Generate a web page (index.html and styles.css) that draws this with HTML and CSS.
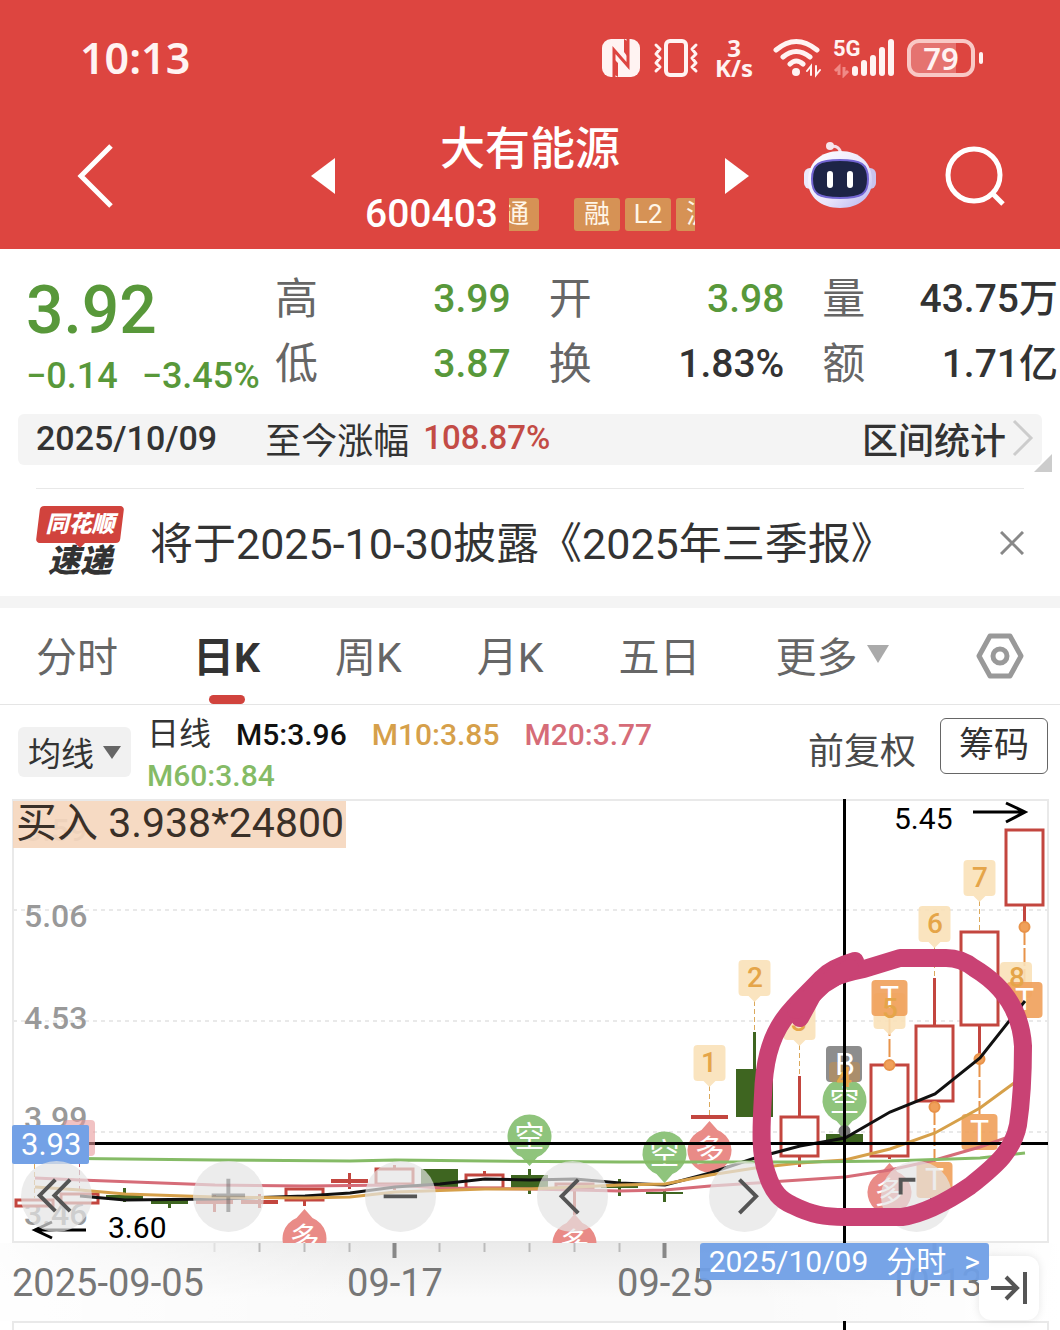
FILE: index.html
```html
<!DOCTYPE html>
<html lang="zh-CN">

<head>
  <meta charset="UTF-8">
  <meta name="viewport" content="width=device-width, initial-scale=1">
  <title>大有能源 600403</title>
  <link rel="stylesheet" href="styles.css">
</head>

<body>
  <header class="header">
    <div class="status">
      <span class="time">10:13</span>
      <div class="status-icons">
        <svg width="40" height="40" viewBox="0 0 40 40">
          <rect x="1" y="1" width="38" height="38" rx="9" fill="#fff3f2" />
          <path d="M13 39V12L27 28V1" fill="none" stroke="#dd4540" stroke-width="3" />
          <path d="M14 22V37L17 39V25zM26 18V3L23 1V14z" fill="#dd4540" />
        </svg>
        <svg width="46" height="40" viewBox="0 0 46 40" fill="none" stroke="#fff3f2" stroke-width="4" stroke-linejoin="round" stroke-linecap="round">
          <rect x="13" y="3" width="20" height="34" rx="4" />
          <path d="M3 7l4 4-4 5 4 4-4 5 4 4-4 4M43 7l-4 4 4 5-4 4 4 5-4 4 4 4" stroke-width="3" />
        </svg>
        <div class="speed"><span>3</span><span>K/s</span></div>
        <svg class="wifi" width="48" height="40" viewBox="0 0 48 40" fill="none" stroke="#fff3f2" stroke-width="5" stroke-linecap="round">
          <path d="M3 12Q23-5 44 12M10 19Q23 8 37 19M17 26Q23 20 30 26" />
          <circle cx="23" cy="34" r="4" fill="#fff3f2" stroke="none" />
          <path d="M38 37V28l-4 5M43 28v9l4-5" stroke-width="2" />
        </svg>
        <svg class="signal" width="62" height="40" viewBox="0 0 62 40">
          <text x="0" y="18">5G</text>
          <g stroke="#fff3f2" stroke-width="6" stroke-linecap="round">
            <path d="M22 31v4M31 25v10M40 20v15M49 12v23M58 4v31" />
          </g>
          <path d="M6 37v-8l-4 4M11 29v8l4-4" stroke="#f08a86" stroke-width="3" fill="none" />
        </svg>
        <div class="battery"><span>79</span></div>
      </div>
    </div>
    <nav class="nav">
      <button class="icon-btn back" aria-label="返回">
        <svg width="36" height="64" viewBox="0 0 36 64"><path d="M34 2L4 32l30 30" fill="none" stroke="#fff" stroke-width="5" /></svg>
      </button>
      <div class="stock">
        <button class="icon-btn" aria-label="上一只">
          <svg width="24" height="36" viewBox="0 0 24 36"><path d="M24 0v36L0 18z" fill="#fff" /></svg>
        </button>
        <div class="stock-info">
          <h1>大有能源</h1>
          <div class="code-row">
            <span class="code">600403</span>
            <div class="tags">
              <div class="tag-strip">
                <span class="tag tag-first">通</span>
                <span class="tag">融</span>
                <span class="tag">L2</span>
                <span class="tag">沪</span>
              </div>
            </div>
          </div>
        </div>
        <button class="icon-btn" aria-label="下一只">
          <svg width="24" height="36" viewBox="0 0 24 36"><path d="M0 0v36l24-18z" fill="#fff" /></svg>
        </button>
      </div>
      <div class="nav-right">
        <button class="icon-btn" aria-label="智能助手">
          <svg width="74" height="70" viewBox="0 0 74 70">
            <defs>
              <linearGradient id="shell" x1="0" y1="0" x2="1" y2="1">
                <stop offset="0" stop-color="#fff" />
                <stop offset=".6" stop-color="#e9e4fb" />
                <stop offset="1" stop-color="#b3b2ee" />
              </linearGradient>
            </defs>
            <path d="M26 6Q37 3 38 14" fill="none" stroke="#f3dfe8" stroke-width="3" />
            <circle cx="27" cy="5" r="4" fill="#f7e6ec" />
            <rect x="1" y="27" width="12" height="21" rx="6" fill="#ece9fb" />
            <rect x="61" y="27" width="12" height="21" rx="6" fill="#c9c3ee" />
            <path d="M37 10C57 10 69 22 69 40C69 56 56 67 37 67S5 56 5 40C5 22 17 10 37 10z" fill="url(#shell)" />
            <path d="M37 19C58 19 65 23 65 38S59 57 37 57S9 53 9 38S16 19 37 19z" fill="#1d2446" stroke="#7265d2" stroke-width="2" />
            <path d="M27 33v11M47 33v11" stroke="#fff" stroke-width="6" stroke-linecap="round" />
          </svg>
        </button>
        <button class="icon-btn" aria-label="搜索">
          <svg width="60" height="60" viewBox="0 0 60 60" fill="none" stroke="#fff" stroke-width="5"><circle cx="29" cy="29" r="26" /><path d="M48 48l10 10" /></svg>
        </button>
      </div>
    </nav>
  </header>

  <section class="quote">
    <div class="price-box">
      <div class="price">3.92</div>
      <div class="change"><span>−0.14</span><span>−3.45%</span></div>
    </div>
    <dl class="stats">
      <div><dt>高</dt><dd class="down">3.99</dd></div>
      <div><dt>开</dt><dd class="down">3.98</dd></div>
      <div><dt>量</dt><dd>43.75万</dd></div>
      <div><dt>低</dt><dd class="down">3.87</dd></div>
      <div><dt>换</dt><dd>1.83%</dd></div>
      <div><dt>额</dt><dd>1.71亿</dd></div>
    </dl>
  </section>

  <section class="range">
    <span class="range-date">2025/10/09</span>
    <span>至今涨幅</span>
    <span class="range-rate">108.87%</span>
    <button class="range-btn">区间统计
      <svg width="22" height="38" viewBox="0 0 22 38"><path d="M2 2l17 17L2 36" fill="none" stroke="#ccc" stroke-width="3" /></svg>
    </button>
    <i class="corner"></i>
  </section>

  <section class="news">
    <div class="news-logo">
      <span class="logo-top">同花顺</span>
      <span class="logo-bottom">速递</span>
    </div>
    <a class="news-link" href="#">将于2025-10-30披露《2025年三季报》</a>
    <button class="icon-btn" aria-label="关闭">
      <svg width="24" height="24" viewBox="0 0 24 24"><path d="M1 1l22 22M23 1L1 23" stroke="#888" stroke-width="3" /></svg>
    </button>
  </section>

  <nav class="tabs">
    <button>分时</button>
    <button class="active">日K</button>
    <button>周K</button>
    <button>月K</button>
    <button>五日</button>
    <button class="more">更多
      <svg width="22" height="18" viewBox="0 0 22 18"><path d="M0 0h22L11 18z" fill="#aaa" /></svg>
    </button>
    <button class="gear" aria-label="设置">
      <svg width="48" height="46" viewBox="0 0 48 46" fill="none" stroke="#999" stroke-width="5" stroke-linejoin="round"><path d="M14 3h20l11 20-11 20H14L3 23z" /><circle cx="24" cy="23" r="7" /></svg>
    </button>
  </nav>

  <section class="ma">
    <button class="ma-select">均线
      <svg width="18" height="13" viewBox="0 0 18 13"><path d="M0 0h18L9 13z" fill="#666" /></svg>
    </button>
    <div class="ma-values">
      <span class="ma-name">日线</span>
      <span class="m5">M5:3.96</span>
      <span class="m10">M10:3.85</span>
      <span class="m20">M20:3.77</span>
      <span class="m60">M60:3.84</span>
    </div>
    <button class="fq">前复权</button>
    <button class="chips">筹码</button>
  </section>

  <section class="chart">
    <svg class="kline" viewBox="0 799 1060 531">
      <defs>
        <linearGradient id="axisShade" x1="0" y1="0" x2="0" y2="1">
          <stop offset="0" stop-color="#ebebeb" />
          <stop offset=".7" stop-color="#fafafa" />
          <stop offset="1" stop-color="#fafafa" />
        </linearGradient>
        <linearGradient id="axisFade">
          <stop offset="0" stop-color="#fff" stop-opacity=".9" />
          <stop offset=".35" stop-color="#fff" stop-opacity="0" />
          <stop offset=".7" stop-color="#fff" stop-opacity="0" />
          <stop offset="1" stop-color="#fff" />
        </linearGradient>
        <clipPath id="plot"><rect x="12" y="799" width="1038" height="444" /></clipPath>
        <g id="short">
          <path d="M0 29L-8 20A22 22 0 1 1 8 20z" fill="#8fc47c" />
          <text class="mark" y="10">空</text>
        </g>
        <g id="long">
          <path d="M0-29L-8-20A22 22 0 1 0 8-20z" fill="#e98b87" />
          <text class="mark" y="11">多</text>
        </g>
        <path id="flag" d="M-12-18h24q4 0 4 4v28q0 4-4 4h-6l-6 6-6-6h-6q-4 0-4-4v-28q0-4 4-4z" fill="#fae1b8" fill-opacity=".9" />
        <g id="trade">
          <rect x="-18" y="-18" width="36" height="36" rx="4" fill="#f0a05a" fill-opacity=".9" />
          <text class="trade-text" y="10">T</text>
        </g>
      </defs>

      <!-- time axis background -->
      <rect x="0" y="1243" width="1060" height="78" fill="url(#axisShade)" />
      <rect x="0" y="1243" width="1060" height="78" fill="url(#axisFade)" />

      <g fill="none" stroke="#e9e9e9" stroke-width="2">
        <path d="M13 1242V800H1048V1242zM13 1330V1322H1048V1330" />
        <path d="M13 910H1048M13 1021H1048M13 1132H1048" stroke-dasharray="4 4" />
      </g>

      <g class="y-labels">
        <text x="24" y="841" opacity=".5">3.59</text>
        <text x="24" y="927">5.06</text>
        <text x="24" y="1029">4.53</text>
        <text x="24" y="1129">3.99</text>
        <text x="24" y="1225">3.46</text>
      </g>

      <g clip-path="url(#plot)">
        <!-- nine-turn guide lines -->
        <g stroke="#dba95c" stroke-width="1" stroke-dasharray="5 3">
          <path d="M34.5 1164V1198M709.5 1086V1117M754.5 1001V1032M799.5 1045V1076M934.5 947V978M979.5 901V932" />
          <path d="M79.5 1162V1194" stroke="#b55368" />
        </g>

        <!-- rising candles -->
        <g fill="#fff" stroke="#c3463f" stroke-width="3">
          <path d="M304.5 1200V1206M394.5 1165V1190M484.5 1171V1175M574.5 1187V1215M799.5 1076V1167M889.5 1066V1159M934.5 978V1107M979.5 932V1060M1024.5 905V926" />
          <path d="M214.5 1195V1212M259.5 1194V1208M349.5 1173V1189" />
          <path d="M196 1202h37M241 1202h37M331 1181h37M691 1117h37" stroke-width="4" />
          <rect x="16" y="1200" width="37" height="6" />
          <rect x="61" y="1194" width="37" height="9" />
          <rect x="286" y="1189" width="37" height="11" />
          <rect x="376" y="1169" width="37" height="15" />
          <rect x="466" y="1175" width="37" height="13" />
          <rect x="556" y="1184" width="37" height="4" />
          <rect x="781" y="1117" width="37" height="39" />
          <rect x="871" y="1065" width="37" height="91" />
          <rect x="916" y="1026" width="37" height="75" />
          <rect x="961" y="932" width="37" height="93" />
          <rect x="1006" y="830" width="37" height="75" />
        </g>

        <!-- falling candles -->
        <g fill="#3e6520" stroke="#3e6520">
          <path d="M124.5 1188V1202M169.5 1200V1208M529.5 1169V1194M619.5 1179V1196M664.5 1190V1202M754.5 1032V1080" stroke-width="3" />
          <g stroke="none">
            <rect x="106" y="1195" width="37" height="4" />
            <rect x="151" y="1200" width="37" height="4" />
            <rect x="421" y="1169" width="37" height="19" />
            <rect x="511" y="1175" width="37" height="13" />
            <rect x="601" y="1186" width="37" height="2" />
            <rect x="646" y="1192" width="37" height="2" />
            <rect x="736" y="1069" width="37" height="48" />
            <rect x="826" y="1134" width="37" height="11" />
          </g>
        </g>

        <!-- signals -->
        <use href="#short" x="529.5" y="1137" />
        <use href="#short" x="664.5" y="1154" />
        <use href="#short" x="844.5" y="1101" />
        <use href="#long" x="709.5" y="1150" />
        <use href="#long" x="304.5" y="1238" />
        <use href="#long" x="574.5" y="1243" />
        <use href="#long" x="889.5" y="1192" />

        <g fill="#f0a05a" stroke="#e8934a" stroke-width="2">
          <path d="M889.5 1018V1065M1024.5 927V982M979.5 1059V1114M934.5 1107V1162" stroke-dasharray="18 3" />
          <circle cx="889.5" cy="1065" r="5" />
          <circle cx="934.5" cy="1107" r="5" />
          <circle cx="979.5" cy="1059" r="5" />
          <circle cx="1024.5" cy="927" r="5" />
        </g>

        <g class="flags">
          <use href="#flag" x="709.5" y="1063" /><text x="709" y="1072">1</text>
          <use href="#flag" x="754.5" y="978" /><text x="755" y="987">2</text>
          <use href="#flag" x="799.5" y="1022" /><text x="799" y="1031">3</text>
          <use href="#flag" x="889.5" y="1011" />
          <use href="#flag" x="934.5" y="924" /><text x="935" y="933">6</text>
          <use href="#flag" x="979.5" y="878" /><text x="980" y="887">7</text>
          <use href="#flag" x="1016" y="980" />
        </g>
        <use href="#trade" x="889.5" y="998" />
        <use href="#trade" x="1024.5" y="1000" />
        <use href="#trade" x="979.5" y="1132" />
        <use href="#trade" x="934.5" y="1180" />
        <rect x="826" y="1046" width="36" height="36" rx="4" fill="#8d8d8d" />
        <rect x="829" y="1062" width="31" height="20" rx="4" fill="#b78e5c" fill-opacity=".7" />
        <text class="trade-text" x="845" y="1075">B</text>
        <circle cx="844.5" cy="1131" r="6" fill="#777" />
        <g class="flags">
          <text x="844" y="1087">4</text>
          <text x="890" y="1018">5</text>
          <text x="1017" y="987">8</text>
        </g>

        <!-- moving averages -->
        <g fill="none" stroke-width="3">
          <path stroke="#d66c78" d="M35 1178L80 1180L215 1185L305 1186L395 1185L440 1188L530 1189L620 1191L665 1190L710 1186L800 1180L845 1177L890 1170L935 1160L980 1147L1025 1131" />
          <path stroke="#111" d="M80 1196L125 1200L215 1199L305 1196L350 1193L395 1187L440 1184L485 1179L530 1180L575 1179L620 1183L665 1185L710 1173L755 1158L800 1146L845 1138L890 1112L935 1094L980 1058L1025 1001" />
          <path stroke="#d6a04a" d="M35 1187L80 1190L125 1194L215 1197L305 1198L350 1197L395 1192L485 1189L530 1189L575 1187L620 1185L665 1184L710 1175L755 1168L800 1163L845 1160L890 1149L935 1133L980 1108L1025 1075" />
          <path stroke="#85bb66" d="M35 1158L125 1159L215 1160L350 1161L395 1160L485 1161L620 1162L800 1162L890 1161L980 1158L1025 1153" />
        </g>
      </g>

      <!-- high and low -->
      <g class="extremes">
        <text x="894" y="829">5.45</text>
        <text x="108" y="1238">3.60</text>
        <path d="M973 812H1024M1006 803L1025 812L1006 822M86 1230H36M52 1222L35 1230L52 1238" />
      </g>

      <!-- crosshair -->
      <path d="M844.5 799V1243M844.5 1321V1330M80 1143.5H1048" stroke="#000" stroke-width="3" />
      <rect x="64" y="1120" width="31" height="36" rx="4" fill="#e79a9b" fill-opacity=".6" />
      <rect x="12" y="1125" width="77" height="39" rx="2" fill="#73a1e6" />
      <text class="cross-price" x="21" y="1155">3.93</text>

      <rect x="13" y="801" width="333" height="47" fill="#f5d3b8" fill-opacity=".85" />
      <text class="buy" x="16" y="837">买入 3.938*24800</text>

      <!-- ticks and dates -->
      <path d="M214.5 1243v9" stroke="#e0e0e0" stroke-width="2" />
      <path d="M259.5 1243v9M304.5 1243v9M349.5 1243v9M439.5 1243v9M484.5 1243v9M529.5 1243v9M574.5 1243v9M619.5 1243v9" stroke="#bbb" stroke-width="2" />
      <path d="M394.5 1243v15M664.5 1243v15M934.5 1243v15" stroke="#888" stroke-width="4" />
      <g class="dates">
        <text x="12" y="1296">2025-09-05</text>
        <text class="mid" x="395" y="1296">09-17</text>
        <text class="mid" x="665" y="1296">09-25</text>
        <text class="mid" x="935" y="1296">10-13</text>
      </g>
    </svg>

    <div class="controls">
      <button aria-label="最左"><svg viewBox="0 0 72 72"><path d="M35 19L19 35L35 51M50 19L34 35L50 51" /></svg></button>
      <button aria-label="放大"><svg class="pale" viewBox="0 0 72 72"><path d="M19 35H53M36 18V52" /></svg></button>
      <button aria-label="缩小"><svg viewBox="0 0 72 72"><path d="M19 36H53" /></svg></button>
      <button aria-label="左移"><svg viewBox="0 0 72 72"><path d="M42 19L25 36L42 53" /></svg></button>
      <button aria-label="右移"><svg viewBox="0 0 72 72"><path d="M31 19L48 36L31 53" /></svg></button>
      <button aria-label="全屏"><svg viewBox="0 0 72 72"><path d="M20 34V19H35M52 38V53H38" /></svg></button>
    </div>

    <svg class="scribble" viewBox="0 799 1060 531">
      <path d="M855 961C838 966 828 972 822 978C808 993 795 1004 784 1019C769 1040 764 1065 763 1095C761 1130 760 1155 767 1174C773 1193 781 1200 792 1205C812 1215 825 1217 845 1217H902C923 1214 945 1203 970 1186C998 1164 1013 1150 1018 1125C1021 1105 1023 1080 1023 1046C1021 1012 1004 986 974 968C965 961 956 958 946 958H900L864 969C834 975 823 981 812 996L800 1018" />
      <path d="M850 968L824 984L796 1010" />
    </svg>

    <button class="latest" aria-label="回到最新">
      <svg width="38" height="34" viewBox="0 0 38 34" fill="none" stroke="#555" stroke-width="4"><path d="M1 17H27M16 6L27 17L16 28M35 1V33" /></svg>
    </button>
    <button class="date-tip"><span>2025/10/09</span><span>分时</span><span>&gt;</span></button>
  </section>
</body>

</html>
```
FILE: styles.css
```css
* {
  box-sizing: border-box;
}

body {
  margin: 0;
  background: #fff;
  color: #333;
  font-family: Roboto, "Noto Sans CJK SC", sans-serif;
}

button {
  padding: 0;
  border: none;
  background: none;
  color: inherit;
  font: inherit;
  cursor: pointer;
}

svg {
  display: block;
}

.header {
  background: #dd4540;
  color: #fff;
}

.status {
  display: flex;
  justify-content: space-between;
  align-items: center;
  height: 110px;
  padding: 6px 85px 0 80px;
}

.time {
  color: #fff3f2;
  font: 600 43px/48px "Noto Sans", sans-serif;
}

.status-icons {
  display: flex;
  align-items: center;
  gap: 12px;
}

.speed {
  display: flex;
  flex-direction: column;
  align-items: center;
  width: 46px;
  color: #fff3f2;
  font: 700 24px/20px "Noto Sans", sans-serif;
}

.wifi {
  margin-left: 4px;
}

.signal text {
  fill: #fff3f2;
  font-size: 22px;
  font-weight: 700;
}

.battery {
  position: relative;
  width: 68px;
  height: 38px;
  border: 4px solid #f9c8c5;
  border-radius: 12px;
  background: linear-gradient(90deg, #e57370 75%, #dd4540 75%);
  color: #fff3f2;
  font: 600 31px/30px "Noto Sans", sans-serif;
  text-align: center;
}

.battery::after {
  content: "";
  position: absolute;
  right: -12px;
  top: 9px;
  width: 4px;
  height: 12px;
  border-radius: 2px;
  background: #fff3f2;
}

.nav {
  display: grid;
  grid-template-columns: 1fr auto 1fr;
  align-items: center;
  height: 139px;
  padding: 0 55px 8px 77px;
}

.back {
  justify-self: start;
}

.stock {
  display: flex;
  align-items: center;
  gap: 30px;
  margin-left: -22px;
}

.stock-info {
  width: 330px;
  padding-top: 8px;
}

h1 {
  margin: 0;
  font-size: 45px;
  font-weight: 500;
  line-height: 54px;
  text-align: center;
}

.code-row {
  display: flex;
  align-items: center;
  gap: 11px;
  height: 45px;
  margin-top: 15px;
}

.code {
  font-size: 39px;
  font-weight: 500;
}

.tags {
  flex: 1;
  overflow: hidden;
}

.tag-strip {
  display: flex;
  gap: 5px;
  margin-left: -16px;
}

.tag {
  flex: none;
  width: 46px;
  border-radius: 3px;
  background: #d69255;
  color: #fff6e8;
  font-size: 26px;
  line-height: 33px;
  text-align: center;
}

.tag-first {
  margin-right: 30px;
}

.nav-right {
  display: flex;
  justify-content: flex-end;
  align-items: center;
  gap: 68px;
}

.quote {
  display: flex;
  padding: 17px 2px 6px 26px;
}

.price-box {
  flex: none;
  width: 249px;
  padding-top: 12px;
  color: #58983a;
  font-weight: 500;
}

.price {
  font-size: 66px;
  line-height: 66px;
}

.change {
  display: flex;
  gap: 24px;
  font-size: 36px;
  line-height: 64px;
}

.stats {
  display: grid;
  flex: 1;
  grid-template-columns: 1fr 1fr 1fr;
  grid-auto-rows: 65px;
  column-gap: 38px;
  margin: 0;
}

.stats div {
  display: flex;
  justify-content: space-between;
  align-items: center;
}

.stats dt {
  color: #666;
  font-size: 43px;
  line-height: 60px;
}

.stats dd {
  margin: 0;
  font-size: 39px;
  font-weight: 500;
  line-height: 60px;
  white-space: nowrap;
}

.stats .down {
  color: #58983a;
}

.range {
  position: relative;
  display: flex;
  align-items: center;
  height: 51px;
  margin: 0 18px 23px;
  padding: 0 8px 4px 18px;
  border-radius: 6px;
  background: #f4f4f4;
  font-size: 36px;
}

.range-date {
  margin-right: 48px;
  font-size: 34px;
  font-weight: 500;
}

.range-rate {
  margin-left: 14px;
  color: #c34b45;
  font-size: 33px;
  font-weight: 500;
}

.range-btn {
  display: flex;
  align-items: center;
  gap: 6px;
  margin-left: auto;
  font-weight: 500;
}

.corner {
  position: absolute;
  right: -10px;
  bottom: -7px;
  border: 9px solid #ccc;
  border-top-color: transparent;
  border-left-color: transparent;
}

.news {
  display: flex;
  align-items: center;
  height: 108px;
  margin: 0 36px;
  border-top: 1px solid #e8e8e8;
}

.news-logo {
  display: flex;
  flex-direction: column;
  align-items: center;
  width: 88px;
  margin-right: 26px;
  font-style: italic;
  font-weight: 900;
}

.logo-top {
  position: relative;
  z-index: 0;
  width: 84px;
  color: #fff;
  font-size: 23px;
  line-height: 37px;
  text-align: center;
}

.logo-top::before {
  content: "";
  position: absolute;
  inset: 0;
  z-index: -1;
  border-radius: 4px;
  background: #d1433d;
  transform: skewX(-7deg);
}

.logo-top::after {
  content: "";
  position: absolute;
  left: 36px;
  top: 36px;
  border: 6px solid transparent;
  border-top-color: #d1433d;
}

.logo-bottom {
  font-size: 32px;
  line-height: 36px;
}

.news-link {
  flex: 1;
  padding-bottom: 5px;
  color: #333;
  font-size: 43px;
  text-decoration: none;
  white-space: nowrap;
}

.tabs {
  display: flex;
  align-items: center;
  gap: 75px;
  height: 109px;
  padding: 0 36px;
  border-top: 12px solid #f4f4f4;
  border-bottom: 1px solid #e5e5e5;
  color: #666;
  font-size: 41px;
}

.tabs button {
  position: relative;
  flex: none;
  height: 96px;
  padding-bottom: 5px;
}

.tabs .active {
  color: #333;
  font-weight: 700;
}

.tabs .active::after {
  content: "";
  position: absolute;
  left: 50%;
  bottom: 0;
  width: 36px;
  height: 9px;
  margin-left: -18px;
  border-radius: 5px;
  background: #d1433d;
}

.tabs .more {
  display: flex;
  align-items: center;
  gap: 9px;
}

.tabs .gear {
  margin-left: auto;
  padding-bottom: 0;
}

.ma {
  display: flex;
  align-items: center;
  height: 94px;
  padding: 0 12px 0 18px;
}

.ma-select {
  display: flex;
  flex: none;
  align-items: center;
  gap: 9px;
  height: 50px;
  padding: 0 10px;
  border-radius: 6px;
  background: #f1f1f1;
  font-size: 33px;
}

.ma-values {
  display: flex;
  flex: 1;
  flex-wrap: wrap;
  column-gap: 25px;
  margin: 0 70px 0 16px;
  padding-top: 6px;
  font-size: 30px;
  font-weight: 500;
  line-height: 41px;
}

.ma-name {
  font-size: 32px;
  font-weight: 400;
}

.m5 {
  color: #111;
}

.m10 {
  color: #d6a04a;
}

.m20 {
  color: #d66c78;
}

.m60 {
  color: #85bb66;
}

.fq {
  margin-right: 24px;
  color: #4a4a4a;
  font-size: 36px;
  line-height: 52px;
}

.chips {
  width: 108px;
  height: 56px;
  margin-bottom: 12px;
  border: 1px solid #666;
  border-radius: 6px;
  font-size: 35px;
  line-height: 54px;
}

.chart {
  position: relative;
}

.kline {
  width: 100%;
}

.y-labels {
  fill: #999;
  font-size: 32px;
  font-weight: 500;
}

.mark {
  fill: #fff;
  font-size: 30px;
  text-anchor: middle;
}

.trade-text {
  fill: #fff;
  font-size: 32px;
  text-anchor: middle;
}

.flags text {
  fill: #e5a549;
  font-size: 28px;
  font-weight: 500;
  text-anchor: middle;
}

.extremes {
  fill: #000;
  font-size: 30px;
}

.extremes path {
  fill: none;
  stroke: #000;
  stroke-width: 3;
}

.cross-price {
  fill: #fff;
  font-size: 31px;
}

.buy {
  fill: #3a3028;
  font-size: 41px;
}

.dates {
  fill: #777;
  font-size: 38px;
}

.dates .mid {
  text-anchor: middle;
}

.controls {
  position: absolute;
  left: 2%;
  right: 10.2%;
  top: 68.2%;
  display: flex;
  justify-content: space-between;
}

.controls button {
  width: 7.6%;
  border-radius: 50%;
  background: rgba(228, 228, 228, 0.7);
}

.controls path {
  fill: none;
  stroke: #555;
  stroke-width: 4;
}

.controls .pale {
  opacity: 0.4;
}

.scribble {
  position: absolute;
  left: 0;
  top: 0;
  width: 100%;
  pointer-events: none;
}

.scribble path {
  fill: none;
  stroke: #c94274;
  stroke-width: 18;
  stroke-linecap: round;
  stroke-linejoin: round;
}

.date-tip {
  position: absolute;
  right: 6.7%;
  top: 83.7%;
  display: flex;
  gap: 18px;
  height: 37px;
  padding: 0 9px;
  border-radius: 3px;
  background: rgba(112, 159, 230, 0.95);
  color: #fff;
  font-size: 30px;
  line-height: 37px;
  white-space: nowrap;
}

.latest {
  position: absolute;
  right: 2%;
  top: 86%;
  display: flex;
  justify-content: center;
  align-items: center;
  width: 60px;
  height: 64px;
  border-radius: 12px;
  background: #fff;
  box-shadow: 0 0 8px rgba(0, 0, 0, 0.1);
}
```
